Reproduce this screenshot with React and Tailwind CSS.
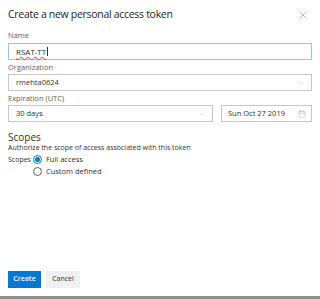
import { X, ChevronDown, Calendar } from 'lucide-react';

const font = { fontFamily: '"Open Sans", "Noto Sans", sans-serif' };

function Label({ children }) {
  return <div className="text-[7.5px] leading-[10px] text-[#605e5c]">{children}</div>;
}

function Radio({ checked, label }) {
  return (
    <div className="flex items-center gap-[4px] h-[11px]">
      <span
        className={`w-[9px] h-[9px] rounded-full border flex items-center justify-center ${
          checked ? 'border-[#0078d4]' : 'border-[#605e5c]'
        }`}
      >
        {checked && <span className="w-[5px] h-[5px] rounded-full bg-[#0078d4]" />}
      </span>
      <span className="text-[7.5px] text-[#323130]">{label}</span>
    </div>
  );
}

export default function App() {
  return (
    <div style={font} className="w-[320px] h-[299px] bg-white flex flex-col overflow-hidden">
      <div className="flex-1 flex flex-col px-[8px]">
        {/* Header */}
        <div className="flex items-center justify-between h-[28px] pt-[1px]">
          <h1 className="text-[10.5px] tracking-[-0.3px] text-[#201f1e]">Create a new personal access token</h1>
          <X size={12} strokeWidth={1.2} className="text-[#8a8886] mr-[3px]" />
        </div>

        {/* Name */}
        <div className="mt-[2px]">
          <Label>Name</Label>
        </div>
        <div className="mt-[3px] h-[17px] border border-[#9cc3ef] flex items-center px-[7px]">
          <span className="text-[8px] text-[#323130] underline decoration-wavy decoration-[#e04040] decoration-[0.5px]">
            RSAT-TT
          </span>
          <span className="w-px h-[9px] bg-[#323130] ml-[1px]" />
        </div>

        {/* Organization */}
        <div className="mt-[2px]">
          <Label>Organization</Label>
        </div>
        <div className="mt-[2px] h-[17px] border border-[#c8c6c4] flex items-center justify-between pl-[7px] pr-[6px]">
          <span className="text-[7.5px] text-[#323130]">rmehta0624</span>
          <ChevronDown size={8} strokeWidth={1} className="text-[#a19f9d]" />
        </div>

        {/* Expiration */}
        <div className="mt-[2px]">
          <Label>Expiration (UTC)</Label>
        </div>
        <div className="mt-[2px] flex gap-[8px]">
          <div className="w-[205px] h-[17px] border border-[#c8c6c4] flex items-center justify-between pl-[7px] pr-[6px]">
            <span className="text-[7.5px] text-[#323130]">30 days</span>
            <ChevronDown size={8} strokeWidth={1} className="text-[#a19f9d]" />
          </div>
          <div className="flex-1 h-[17px] border border-[#c8c6c4] flex items-center justify-between pl-[6px] pr-[5px]">
            <span className="text-[7.5px] text-[#323130]">Sun Oct 27 2019</span>
            <Calendar size={8} strokeWidth={1} className="text-[#8a8886]" />
          </div>
        </div>

        {/* Scopes */}
        <div className="mt-[10px] text-[10px] leading-[11px] text-[#323130]">Scopes</div>
        <div className="text-[7px] leading-[9px] text-[#323130]">
          Authorize the scope of access associated with this token
        </div>
        <div className="mt-[2px] flex items-start gap-[2px]">
          <span className="text-[7px] leading-[11px] text-[#323130]">Scopes</span>
          <div className="flex flex-col gap-[1px]">
            <Radio checked label="Full access" />
            <Radio label="Custom defined" />
          </div>
        </div>

        {/* Footer */}
        <div className="mt-auto mb-[8px] flex gap-[5px]">
          <button className="w-[33px] h-[17px] bg-[#0078d4] text-white text-[7px] font-semibold">Create</button>
          <button className="w-[34px] h-[17px] bg-[#f0f0f0] text-[#323130] text-[7px]">Cancel</button>
        </div>
      </div>
      <div className="h-[3px] bg-[#8f8f8f]" />
    </div>
  );
}
